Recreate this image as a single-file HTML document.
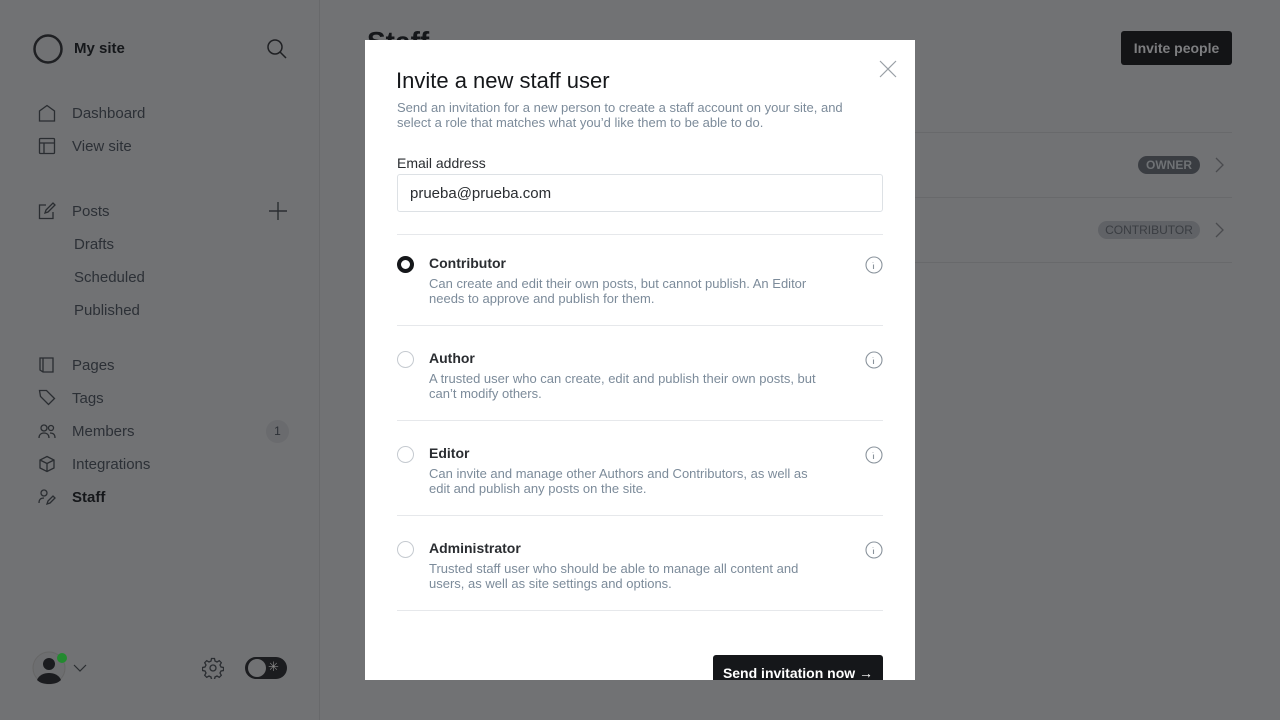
<!DOCTYPE html>
<html><head><meta charset="utf-8"><style>
*{box-sizing:border-box;margin:0;padding:0}
body{width:1280px;height:720px;overflow:hidden;background:#717274;font-family:"Liberation Sans",sans-serif;position:relative;color:#15171a}
.a{position:absolute}
.nav{font-size:15px;color:#2c3036;left:72px;margin-top:1px}
.ic{position:absolute;left:38px}
.modal{position:absolute;left:365px;top:40px;width:550px;height:640px;background:#fff;overflow:hidden}
.m{position:absolute}
.role{position:absolute;left:32px;width:486px}
.role .t{position:absolute;left:32px;top:0;font-size:14px;font-weight:bold;color:#2a2d31}
.role .d{position:absolute;left:32px;top:21px;font-size:13px;line-height:15px;color:#7c8b9a;width:400px}
.radio{position:absolute;left:0;top:1px;width:17px;height:17px;border-radius:50%;border:1px solid #c5cad0}
.info{position:absolute;right:0;top:1px}
.hr{position:absolute;left:32px;width:486px;height:1px;background:#e6e8eb}
</style></head><body>
<div class="a" style="left:319px;top:0;width:1px;height:720px;background:#68696b"></div>
<svg class="a" style="left:32px;top:33px" width="32" height="32"><circle cx="16" cy="16" r="13.5" fill="none" stroke="#1f2023" stroke-width="2.5"/></svg>
<div class="a" style="left:74px;top:40px;font-size:15px;font-weight:bold;color:#15171a">My site</div>
<svg class="a" style="left:266px;top:38px" width="22" height="22" fill="none" stroke="#1f2023" stroke-width="1.5"><circle cx="9" cy="9" r="7"/><path d="M14 14l6 6"/></svg>

<svg class="ic" style="top:104px" width="18" height="18" fill="none" stroke="#2a2d31" stroke-width="1.3"><path d="M1.5 17V7L9 1.5 16.5 7v10z"/></svg>
<div class="a nav" style="top:104px">Dashboard</div>
<svg class="ic" style="top:137px" width="18" height="18" fill="none" stroke="#2a2d31" stroke-width="1.3"><rect x="1.5" y="1.5" width="15" height="15" rx="1"/><path d="M1.5 6h15M6 6v10.5"/></svg>
<div class="a nav" style="top:137px">View site</div>
<svg class="ic" style="top:202px" width="18" height="18" fill="none" stroke="#2a2d31" stroke-width="1.3"><path d="M8 3H1.5v13.5H15V10M7 11l1-3 7-7 2 2-7 7z"/></svg>
<div class="a nav" style="top:202px">Posts</div>
<svg class="a" style="left:268px;top:201px" width="20" height="20" stroke="#2a2d31" stroke-width="1.4"><path d="M10 1v18M1 10h18"/></svg>
<div class="a nav" style="top:235px;left:74px">Drafts</div>
<div class="a nav" style="top:268px;left:74px">Scheduled</div>
<div class="a nav" style="top:301px;left:74px">Published</div>
<svg class="ic" style="top:356px" width="18" height="18" fill="none" stroke="#2a2d31" stroke-width="1.3"><path d="M2 2h13v14H5l-3-2zM5 2v14"/></svg>
<div class="a nav" style="top:356px">Pages</div>
<svg class="ic" style="top:389px" width="18" height="18" fill="none" stroke="#2a2d31" stroke-width="1.3"><path d="M1.5 1.5h7l8 8-6 6-8-8z"/></svg>
<div class="a nav" style="top:389px">Tags</div>
<svg class="ic" style="top:422px" width="18" height="18" fill="none" stroke="#2a2d31" stroke-width="1.3"><circle cx="6" cy="6" r="3"/><circle cx="13" cy="6" r="2.5"/><path d="M1 16c0-4 3-5 5-5s5 1 5 5M12 11c3 0 5 1 5 5"/></svg>
<div class="a nav" style="top:422px">Members</div>
<div class="a" style="left:266px;top:420px;width:23px;height:23px;border-radius:50%;background:#6a6b6e;font-size:12px;color:#2c3036;text-align:center;line-height:23px">1</div>
<svg class="ic" style="top:455px" width="18" height="18" fill="none" stroke="#2a2d31" stroke-width="1.3"><path d="M9 1.5l7 3.5v8L9 16.5 2 13V5zM2 5l7 3.5L16 5M9 8.5v8"/></svg>
<div class="a nav" style="top:455px">Integrations</div>
<svg class="ic" style="top:488px" width="18" height="18" fill="none" stroke="#2a2d31" stroke-width="1.3"><circle cx="6" cy="5" r="3"/><path d="M1 15c0-4 2-5 5-5M9 16l1-3 5-5 2 2-5 5z"/></svg>
<div class="a nav" style="top:488px;font-weight:bold;color:#15171a">Staff</div>

<svg class="a" style="left:32px;top:651px" width="36" height="36"><circle cx="17" cy="17" r="16" fill="#6d6e70" stroke="#666" stroke-width="1"/><circle cx="17" cy="13" r="6" fill="#1b1c1f"/><path d="M5 29c2-5 7-7 12-7s10 2 12 7c-3 3-7 4-12 4s-9-1-12-4z" fill="#1b1c1f"/><circle cx="30" cy="7" r="5" fill="#238a30"/></svg>
<svg class="a" style="left:73px;top:663px" width="14" height="10" fill="none" stroke="#2a2d31" stroke-width="1.2"><path d="M1 2l6 6 6-6"/></svg>
<svg class="a" style="left:202px;top:657px" width="22" height="22" fill="none" stroke="#2a2d31" stroke-width="1.3"><circle cx="11" cy="11" r="3"/><path d="M9.5 1.5h3l.5 2.5 2 1 2.3-1.3 2 2L18 8l1 2 2.5.5v3L19 14l-1 2 1.3 2.3-2 2L15 19l-2 1-.5 2.5h-3L9 20l-2-1-2.3 1.3-2-2L4 16l-1-2-2.5-.5v-3L3 10l1-2-1.3-2.3 2-2L7 5l2-1z"/></svg>
<div class="a" style="left:245px;top:657px;width:42px;height:22px;border-radius:11px;background:#1b1c1f"></div>
<div class="a" style="left:248px;top:659px;width:18px;height:18px;border-radius:50%;background:#717274"></div>
<div class="a" style="left:268px;top:659px;font-size:13px;color:#888">✳</div>

<div class="a" style="left:367px;top:26px;font-size:28px;font-weight:bold;color:#15171a">Staff</div>
<div class="a" style="left:1121px;top:31px;width:111px;height:34px;background:#131416;border-radius:3px;color:#7d7e80;font-size:14px;font-weight:bold;text-align:center;line-height:34px">Invite people</div>
<div class="a" style="left:915px;top:132px;width:317px;height:1px;background:#68696b"></div>
<div class="a" style="left:915px;top:197px;width:317px;height:1px;background:#68696b"></div>
<div class="a" style="left:915px;top:262px;width:317px;height:1px;background:#68696b"></div>
<div class="a" style="left:1138px;top:156px;width:62px;height:18px;border-radius:9px;background:#3a3d42;color:#6f7275;font-size:12px;font-weight:bold;text-align:center;line-height:18px">OWNER</div>
<div class="a" style="left:1098px;top:221px;width:102px;height:18px;border-radius:9px;background:#606266;color:#3a3d42;font-size:12px;text-align:center;line-height:18px">CONTRIBUTOR</div>
<svg class="a" style="left:1214px;top:157px" width="12" height="16" fill="none" stroke="#4a4b4e" stroke-width="1.3"><path d="M2 1l7 7-7 7"/></svg>
<svg class="a" style="left:1214px;top:222px" width="12" height="16" fill="none" stroke="#4a4b4e" stroke-width="1.3"><path d="M2 1l7 7-7 7"/></svg>

<div class="modal">
<svg class="m" style="left:514px;top:20px" width="18" height="18" stroke="#9aa0a6" stroke-width="1.2"><path d="M1 1l16 16M17 1L1 17"/></svg>
<div class="m" style="left:31px;top:28px;font-size:22px;color:#15171a">Invite a new staff user</div>
<div class="m" style="left:32px;top:60px;font-size:13px;line-height:15px;color:#7c8b9a;width:480px">Send an invitation for a new person to create a staff account on your site, and select a role that matches what you’d like them to be able to do.</div>
<div class="m" style="left:32px;top:115px;font-size:14px;color:#2a2d31">Email address</div>
<div class="m" style="left:32px;top:134px;width:486px;height:38px;border:1px solid #dde1e5;border-radius:3px;font-size:15px;line-height:38px;padding-left:12px;color:#2a2d31">prueba@prueba.com</div>
<div class="hr" style="top:194px"></div>
<div class="role" style="top:215px"><div class="radio" style="border:4px solid #15171a"></div><div class="t">Contributor</div><div class="d">Can create and edit their own posts, but cannot publish. An Editor needs to approve and publish for them.</div><svg class="info" width="18" height="18" fill="none" stroke="#8a939c" stroke-width="1.1"><circle cx="9" cy="9" r="8"/><path d="M8 6v.5M8.5 8.5v4.5"/></svg></div>
<div class="hr" style="top:285px"></div>
<div class="role" style="top:310px"><div class="radio"></div><div class="t">Author</div><div class="d">A trusted user who can create, edit and publish their own posts, but can’t modify others.</div><svg class="info" width="18" height="18" fill="none" stroke="#8a939c" stroke-width="1.1"><circle cx="9" cy="9" r="8"/><path d="M8 6v.5M8.5 8.5v4.5"/></svg></div>
<div class="hr" style="top:380px"></div>
<div class="role" style="top:405px"><div class="radio"></div><div class="t">Editor</div><div class="d">Can invite and manage other Authors and Contributors, as well as edit and publish any posts on the site.</div><svg class="info" width="18" height="18" fill="none" stroke="#8a939c" stroke-width="1.1"><circle cx="9" cy="9" r="8"/><path d="M8 6v.5M8.5 8.5v4.5"/></svg></div>
<div class="hr" style="top:475px"></div>
<div class="role" style="top:500px"><div class="radio"></div><div class="t">Administrator</div><div class="d">Trusted staff user who should be able to manage all content and users, as well as site settings and options.</div><svg class="info" width="18" height="18" fill="none" stroke="#8a939c" stroke-width="1.1"><circle cx="9" cy="9" r="8"/><path d="M8 6v.5M8.5 8.5v4.5"/></svg></div>
<div class="hr" style="top:570px"></div>
<div class="m" style="left:348px;top:615px;width:170px;height:36px;background:#15171a;border-radius:3px;color:#fff;font-size:14px;font-weight:bold;text-align:center;line-height:36px">Send invitation now →</div>
</div>
</body></html>
